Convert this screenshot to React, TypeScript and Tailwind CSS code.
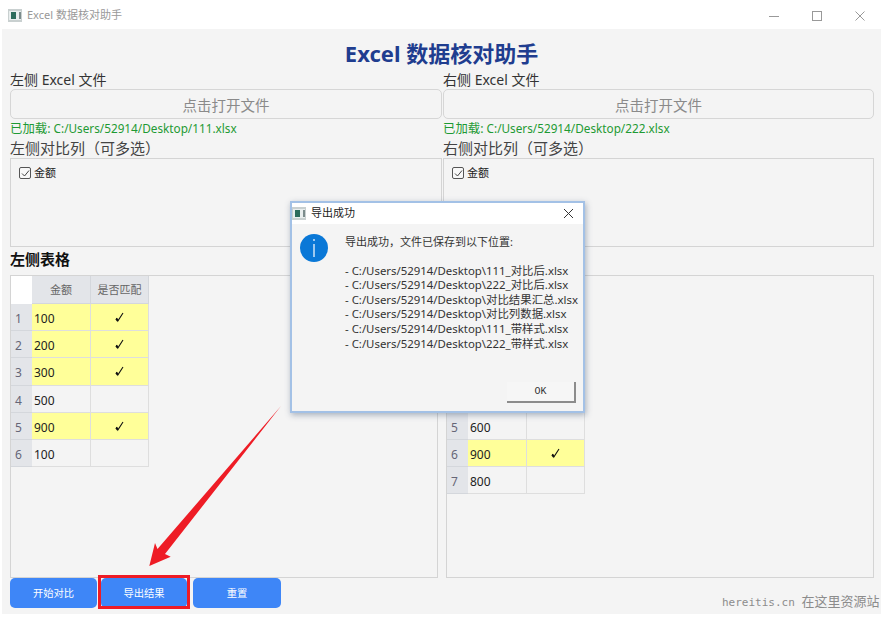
const font = "font-['Noto_Sans','Noto_Sans_CJK_SC',sans-serif]";

function AppIcon() {
  return (
    <svg width="14" height="13" viewBox="0 0 14 13">
      <rect x="0" y="0" width="14" height="13" fill="#c9d0d0" />
      <rect x="1" y="2" width="12" height="9" fill="#e9eeee" />
      <rect x="3" y="3" width="5" height="7" fill="#2c6b5c" />
      <rect x="11" y="3" width="2" height="7" fill="#7c8c8c" />
    </svg>
  );
}

function Check() {
  return (
    <svg width="12" height="12" viewBox="0 0 12 12">
      <path d="M3.5 7 L4.8 10 L10 2" fill="none" stroke="#111" strokeWidth="1.1" />
      <path d="M3.2 7.6 L4.6 9.6" stroke="#111" strokeWidth="2" />
    </svg>
  );
}

function FilePanel({ side, path }: { side: string; path: string }) {
  return (
    <div className="flex flex-col">
      <div className="h-[19px] text-[14px] leading-[19px] text-[#333]">{side}侧 Excel 文件</div>
      <div className="h-[30px] rounded-[5px] border border-[#d6d6d6] bg-[#f4f4f4] text-center text-[14.5px] leading-[30px] text-[#8a8a8a]">
        点击打开文件
      </div>
      <div className="h-[19px] whitespace-nowrap text-[11.75px] leading-[19px] text-[#1e9a33]">
        <span className="text-[12.4px]">已加载:</span> {path}
      </div>
      <div className="h-[20px] text-[15px] leading-[21px] text-[#444]">{side}侧对比列（可多选）</div>
      <div className="h-[89px] border border-[#d4d4d4] px-[8px] pt-[7px]">
        <div className="flex items-center gap-[3px] text-[11px] leading-[14px] text-[#222]">
          <span className="flex h-[12px] w-[12px] items-center justify-center rounded-[2px] border border-[#555] bg-[#f8f8f8]">
            <svg width="9" height="9" viewBox="0 0 9 9">
              <path d="M1 4.5 L3.5 7 L8 1.5" fill="none" stroke="#444" strokeWidth="1" />
            </svg>
          </span>
          金额
        </div>
      </div>
    </div>
  );
}

function DataRow({ index, value, hit }: { index: number; value: string; hit: boolean }) {
  return (
    <div className="flex h-[27.2px]">
      <div className="w-[21px] border-b border-[#d4d7dc] bg-[#e3e5e9] pl-[4px] text-[12px] leading-[29px] text-[#667]">{index}</div>
      <div className={`w-[59px] border-r border-b border-[#dedede] pl-[2px] leading-[29px] ${hit ? "bg-[#ffff99]" : ""}`}>{value}</div>
      <div className={`flex w-[58px] items-center justify-center border-r border-b border-[#dedede] pr-[2px] ${hit ? "bg-[#ffff99]" : ""}`}>
        {hit && <Check />}
      </div>
    </div>
  );
}

const leftRows: [string, boolean][] = [["100", true], ["200", true], ["300", true], ["500", false], ["900", true], ["100", false]];
const rightRows: [string, boolean][] = [["600", false], ["900", true], ["800", false]];
const saved = ["111_对比后.xlsx", "222_对比后.xlsx", "对比结果汇总.xlsx", "对比列数据.xlsx", "111_带样式.xlsx", "222_带样式.xlsx"];

function ExportDialog() {
  return (
    <div className="absolute left-[290px] top-[201px] flex h-[212px] w-[295px] flex-col border-2 border-[#a3c1e6] bg-[#f4f4f4] shadow-[1px_2px_6px_rgba(70,90,120,0.45)]">
      <div className="flex h-[21px] items-center justify-between bg-white pl-[0px] pr-[9px] text-[11px] text-[#222]">
        <div className="flex items-center gap-[5px]">
          <AppIcon />
          导出成功
        </div>
        <svg width="11" height="11" viewBox="0 0 11 11">
          <path d="M1 1 L10 10 M10 1 L1 10" stroke="#333" strokeWidth="1" />
        </svg>
      </div>
      <div className="flex flex-1 pl-[8px] pt-[10px]">
        <div className="flex h-[28px] w-[28px] items-center justify-center rounded-full bg-[#0a78d7]">
          <svg width="4" height="18" viewBox="0 0 4 18">
            <rect x="1.4" y="0" width="1.2" height="2" fill="#fff" />
            <rect x="1.4" y="5" width="1.2" height="13" fill="#fff" />
          </svg>
        </div>
        <div className="ml-[17px] pt-[0.5px] text-[11.4px] leading-[14.6px] text-[#333]">
          <div className="text-[11px]">导出成功，文件已保存到以下位置:</div>
          <div className="h-[14.6px]" />
          {saved.map((name) => (
            <div key={name} className="whitespace-nowrap">- C:/Users/52914/Desktop\{name}</div>
          ))}
        </div>
      </div>
      <div className="flex justify-end pb-[8px] pr-[7px]">
        <div className="h-[21px] w-[69px] border-r-2 border-b-2 border-[#8c8c8c] bg-[#f6f6f6] text-center font-['Liberation_Mono',monospace] text-[10px] leading-[20px] text-[#333]">OK</div>
      </div>
    </div>
  );
}

export default function App() {
  return (
    <div className={`relative h-[617px] w-[883px] overflow-hidden bg-white ${font}`}>
      {/* Title bar */}
      <div className="flex h-[29px] items-center justify-between pl-[8px] pr-[18px] pt-[2px]">
        <div className="flex items-center gap-[5px] text-[11px] text-[#999]">
          <AppIcon />
          Excel 数据核对助手
        </div>
        <div className="flex items-center gap-[33px]">
          <svg width="10" height="10" viewBox="0 0 10 10"><path d="M0 5.5 H10" stroke="#999" /></svg>
          <svg width="10" height="10" viewBox="0 0 10 10"><rect x="0.5" y="0.5" width="9" height="9" fill="none" stroke="#999" /></svg>
          <svg width="10" height="10" viewBox="0 0 10 10"><path d="M0.5 0.5 L9.5 9.5 M9.5 0.5 L0.5 9.5" stroke="#999" /></svg>
        </div>
      </div>

      {/* Main window */}
      <div className="mx-[2px] flex h-[585px] flex-col bg-[#f4f4f4] px-[8px]">
        <div className="h-[41px] text-center text-[22px] font-bold leading-[48px] text-[#1f3d8f]">Excel 数据核对助手</div>
        <div className="grid grid-cols-[432px_431px] gap-x-px">
          <FilePanel side="左" path="C:/Users/52914/Desktop/111.xlsx" />
          <FilePanel side="右" path="C:/Users/52914/Desktop/222.xlsx" />
        </div>
        <div className="h-[28px] text-[15px] font-bold leading-[25px] text-[#111]">左侧表格</div>
        <div className="grid grid-cols-[428px_428px] gap-x-[8px]">
          <div className="h-[303px] border border-[#d4d4d4]">
            <div className="w-fit text-[12px] text-[#222]">
              <div className="flex h-[28px]">
                <div className="w-[21px] bg-white" />
                <div className="w-[59px] border-r border-b border-[#d4d7dc] bg-[#e3e5e9] text-center text-[11px] leading-[27px] text-[#666]">金额</div>
                <div className="w-[58px] border-r border-b border-[#d4d7dc] bg-[#e3e5e9] text-center text-[11px] leading-[27px] text-[#666]">是否匹配</div>
              </div>
              {leftRows.map(([value, hit], i) => (
                <DataRow key={i} index={i + 1} value={value} hit={hit} />
              ))}
            </div>
          </div>
          <div className="h-[303px] border border-[#d4d4d4]">
            {/* header and rows 1-4 are behind the dialog */}
            <div className="w-fit pt-[136.8px] text-[12px] text-[#222]">
              {rightRows.map(([value, hit], i) => (
                <DataRow key={i} index={i + 5} value={value} hit={hit} />
              ))}
            </div>
          </div>
        </div>
        <div className="flex h-[30px] text-center text-[10.3px] leading-[30px] text-white">
          <div className="w-[87px] rounded-[5px] bg-[#3e86f7]">开始对比</div>
          <div className="ml-[4px] w-[86px] rounded-[5px] bg-[#3e86f7]">导出结果</div>
          <div className="ml-[6px] w-[88px] rounded-[5px] bg-[#3e86f7]">重置</div>
        </div>
      </div>

      <ExportDialog />

      {/* Annotation */}
      <div className="absolute left-[98px] top-[575px] h-[34px] w-[92px] border-[3px] border-[#ee1c25]" />
      <svg className="absolute left-0 top-0" width="883" height="617" viewBox="0 0 883 617">
        <polygon points="149.3,566 155,543 157.5,549 281,406 165,554 170.7,556.7" fill="#ee1c25" />
      </svg>
      <div className="absolute left-[722px] top-[594px] whitespace-nowrap font-['DejaVu_Sans_Mono','Noto_Sans_CJK_SC',monospace] text-[11px] leading-[16px] text-[#8c8c8c]">
        hereitis.cn <span className="text-[13px]">在这里资源站</span>
      </div>
    </div>
  );
}
